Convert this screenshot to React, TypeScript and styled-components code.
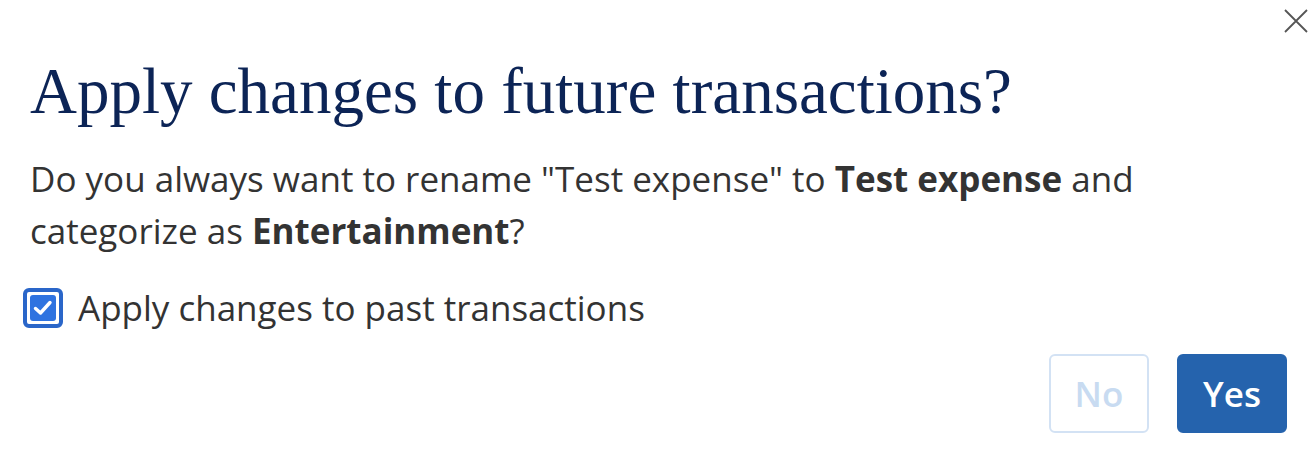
import React from "react";
import styled, { createGlobalStyle } from "styled-components";

const Global = createGlobalStyle`
  html, body { margin: 0; padding: 0; background: #fff; }
  body { font-family: "Open Sans", "Liberation Sans", sans-serif; }
  * { box-sizing: border-box; }
`;

const Dialog = styled.div`
  width: 1314px;
  height: 458px;
  background: #fff;
  display: flex;
  flex-direction: column;
  padding: 6px 3px 0 30px;
`;

const TopBar = styled.div`
  display: flex;
  justify-content: flex-end;
`;

const CloseButton = styled.button`
  width: 30px;
  height: 30px;
  border: none;
  background: transparent;
  padding: 0;
  display: flex;
  align-items: center;
  justify-content: center;
  cursor: pointer;
`;

const Title = styled.h1`
  margin: 19px 0 0 0;
  font-family: "Liberation Serif", "DejaVu Serif", serif;
  font-weight: 400;
  font-size: 65px;
  line-height: 72px;
  color: #0c2456;
`;

const Message = styled.p`
  margin: 26px 0 0 0;
  font-size: 35px;
  line-height: 52px;
  color: #333;
  max-width: 1150px;
  b { font-weight: 700; }
`;

const CheckRow = styled.label`
  display: flex;
  align-items: center;
  gap: 15px;
  margin: 31px 0 0 -7px;
  font-size: 35px;
  line-height: 40px;
  color: #333;
`;

const CheckBox = styled.span`
  width: 40px;
  height: 40px;
  border: 4px solid #2a66c9;
  border-radius: 6px;
  padding: 3px;
  display: flex;
`;

const CheckFill = styled.span`
  flex: 1;
  background: #2f73e0;
  border-radius: 3px;
  display: flex;
  align-items: center;
  justify-content: center;
`;

const Actions = styled.div`
  display: flex;
  justify-content: flex-end;
  gap: 28px;
  margin-top: 26px;
  padding-right: 24px;
`;

const Button = styled.button<{ $primary?: boolean }>`
  height: 79px;
  min-width: ${(p) => (p.$primary ? "110px" : "100px")};
  border-radius: 6px;
  font-family: "Open Sans", "Liberation Sans", sans-serif;
  font-size: 35px;
  font-weight: 600;
  border: 2px solid ${(p) => (p.$primary ? "#2563ad" : "#d3e2f4")};
  background: ${(p) => (p.$primary ? "#2563ad" : "#fff")};
  color: ${(p) => (p.$primary ? "#fff" : "#c8dbf1")};
`;

export default function App() {
  return (
    <>
      <Global />
      <Dialog>
        <TopBar>
          <CloseButton aria-label="Close">
            <svg width="26" height="26" viewBox="0 0 26 26">
              <path d="M2 2 L24 24 M24 2 L2 24" stroke="#555" strokeWidth="1.8" />
            </svg>
          </CloseButton>
        </TopBar>
        <Title>Apply changes to future transactions?</Title>
        <Message>
          Do you always want to rename "Test expense" to <b>Test expense</b> and categorize as{" "}
          <b>Entertainment</b>?
        </Message>
        <CheckRow>
          <CheckBox>
            <CheckFill>
              <svg width="24" height="24" viewBox="0 0 24 24">
                <path d="M4.5 12.5 L9.5 17 L19 6.5" stroke="#fff" strokeWidth="3.4" fill="none" strokeLinecap="round" strokeLinejoin="round" />
              </svg>
            </CheckFill>
          </CheckBox>
          Apply changes to past transactions
        </CheckRow>
        <Actions>
          <Button>No</Button>
          <Button $primary>Yes</Button>
        </Actions>
      </Dialog>
    </>
  );
}
